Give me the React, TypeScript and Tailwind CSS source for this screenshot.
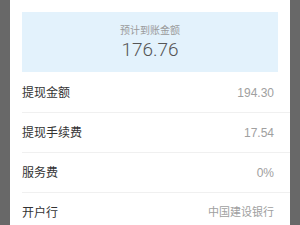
import React from "react";

const rows = [
  { label: "提现金额", value: "194.30", cjk: false },
  { label: "提现手续费", value: "17.54", cjk: false },
  { label: "服务费", value: "0%", cjk: false },
  { label: "开户行", value: "中国建设银行", cjk: true },
];

export default function App() {
  return (
    <div
      className="w-[300px] h-[225px] bg-[#686868] px-[10px] overflow-hidden"
      style={{ fontFamily: '"Liberation Sans", "Noto Sans CJK SC", sans-serif' }}
    >
      <div className="bg-white h-full">
        <div className="pt-[12px] px-[12px]">
          <div className="h-[60px] bg-[#e3f2fc] flex flex-col items-center justify-center">
            <div className="text-[10px] leading-[13px] text-[#9a9a9a]">预计到账金额</div>
            <div className="text-[19px] leading-[22px] text-[#555] mt-[2px] font-light" style={{ fontFamily: 'Roboto, "Liberation Sans", sans-serif' }}>176.76</div>
          </div>
        </div>
        <div className="mt-[1px] pl-[12px]">
          {rows.map((r) => (
            <div key={r.label} className="h-[40px] border-b border-[#f0f0f0] flex items-center justify-between pr-[16px]">
              <span className="text-[12px] text-[#333]">{r.label}</span>
              <span className={r.cjk ? "text-[11px] text-[#a0a0a0]" : "text-[12px] text-[#a0a0a0]"}>{r.value}</span>
            </div>
          ))}
        </div>
      </div>
    </div>
  );
}
